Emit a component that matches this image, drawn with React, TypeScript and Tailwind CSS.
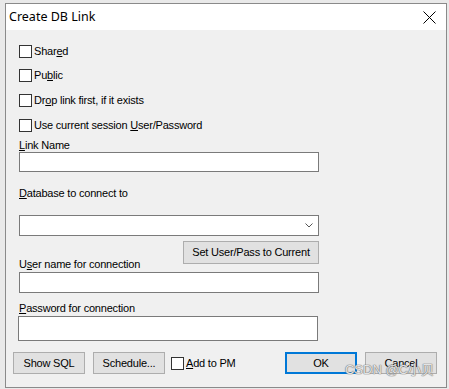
import React from 'react';

const Check: React.FC<{ children: React.ReactNode; className?: string }> = ({ children, className = '' }) => (
  <label className={`flex items-center ${className}`}>
    <span className="w-[13px] h-[13px] border border-[#333333] bg-white mr-[2px] shrink-0"></span>
    <span>{children}</span>
  </label>
);

const Btn: React.FC<{ children: React.ReactNode; className?: string }> = ({ children, className = '' }) => (
  <button className={`h-[22px] bg-[#e1e1e1] border border-[#adadad] text-black ${className}`}>
    {children}
  </button>
);

const App: React.FC = () => {
  return (
    <div
      className="w-[449px] h-[389px] bg-[#e9e9e9] pl-[5px] pt-[3px] overflow-hidden"
      style={{ fontFamily: '"Liberation Sans", Arial, sans-serif' }}
    >
      <div className="relative w-[442px] h-[385px] border border-[#8a8a8a] bg-[#f0f0f0] flex flex-col text-[11px] tracking-[-0.2px] text-black">
        {/* title bar */}
        <div className="h-[26px] bg-white flex items-center justify-between pl-[3px] pr-[8px]">
          <span className="text-[12.5px] tracking-normal" style={{ fontFamily: '"Noto Sans", "Liberation Sans", sans-serif' }}>
            Create DB Link
          </span>
          <svg width="13" height="13" viewBox="0 0 13 13" className="mr-[2px]">
            <path d="M0.5 0.5 L12.5 12.5 M12.5 0.5 L0.5 12.5" stroke="#000" strokeWidth="1" />
          </svg>
        </div>

        {/* body */}
        <div className="pl-[13px] pt-[9px] flex flex-col">
          <Check className="h-[24px]">Shar<u>e</u>d</Check>
          <Check className="h-[25px]">Pu<u>b</u>lic</Check>
          <Check className="h-[25px]">Dr<u>o</u>p link first, if it exists</Check>
          <Check className="h-[24px]"><span>Use current session <u>U</u>ser/Password</span></Check>

          <div className="mt-[2px] h-[13px] leading-[13px]"><u>L</u>ink Name</div>
          <div className="w-[300px] h-[20px] border border-[#7a7a7a] bg-white"></div>

          <div className="mt-[15px] h-[13px] leading-[13px]"><u>D</u>atabase to connect to</div>
          <div className="mt-[15px] w-[300px] h-[21px] border border-[#7a7a7a] bg-white flex items-center justify-end pr-[5px]">
            <svg width="8" height="5" viewBox="0 0 8 5">
              <path d="M0.5 0.5 L4 4 L7.5 0.5" stroke="#555" strokeWidth="1" fill="none" />
            </svg>
          </div>
          <div className="w-[300px] flex justify-end mt-[5px]">
            <Btn className="w-[136px] h-[23px]">Set User/Pass to Current</Btn>
          </div>

          <div className="-mt-[6px] h-[13px] leading-[13px]">U<u>s</u>er name for connection</div>
          <div className="mt-[1px] w-[300px] h-[21px] border border-[#7a7a7a] bg-white"></div>

          <div className="mt-[9px] h-[13px] leading-[13px]"><u>P</u>assword for connection</div>
          <div className="mt-[1px] -ml-[1px] w-[300px] h-[25px] border border-[#7a7a7a] bg-white"></div>
        </div>

        {/* buttons */}
        <div className="mt-[11px] pl-[7px] flex items-center">
          <Btn className="w-[72px]">Show SQL</Btn>
          <Btn className="w-[72px] ml-[8px]">Schedule...</Btn>
          <Check className="ml-[6px]"><u>A</u>dd to PM</Check>
          <button className="ml-auto w-[72px] h-[22px] bg-[#e1e1e1] border-2 border-[#0078d7]">OK</button>
          <Btn className="w-[72px] ml-[8px] mr-[9px]">Cancel</Btn>
        </div>

        <div
          className="absolute right-[12px] bottom-[8px] text-[13px] tracking-normal text-white/80 pointer-events-none"
          style={{ fontFamily: '"Liberation Sans", "Noto Sans CJK SC", sans-serif', textShadow: '0 0 1px #777, 0 0 1px #777, 0 0 1px #777' }}
        >
          CSDN @C小贝
        </div>
      </div>
    </div>
  );
};

export default App;
